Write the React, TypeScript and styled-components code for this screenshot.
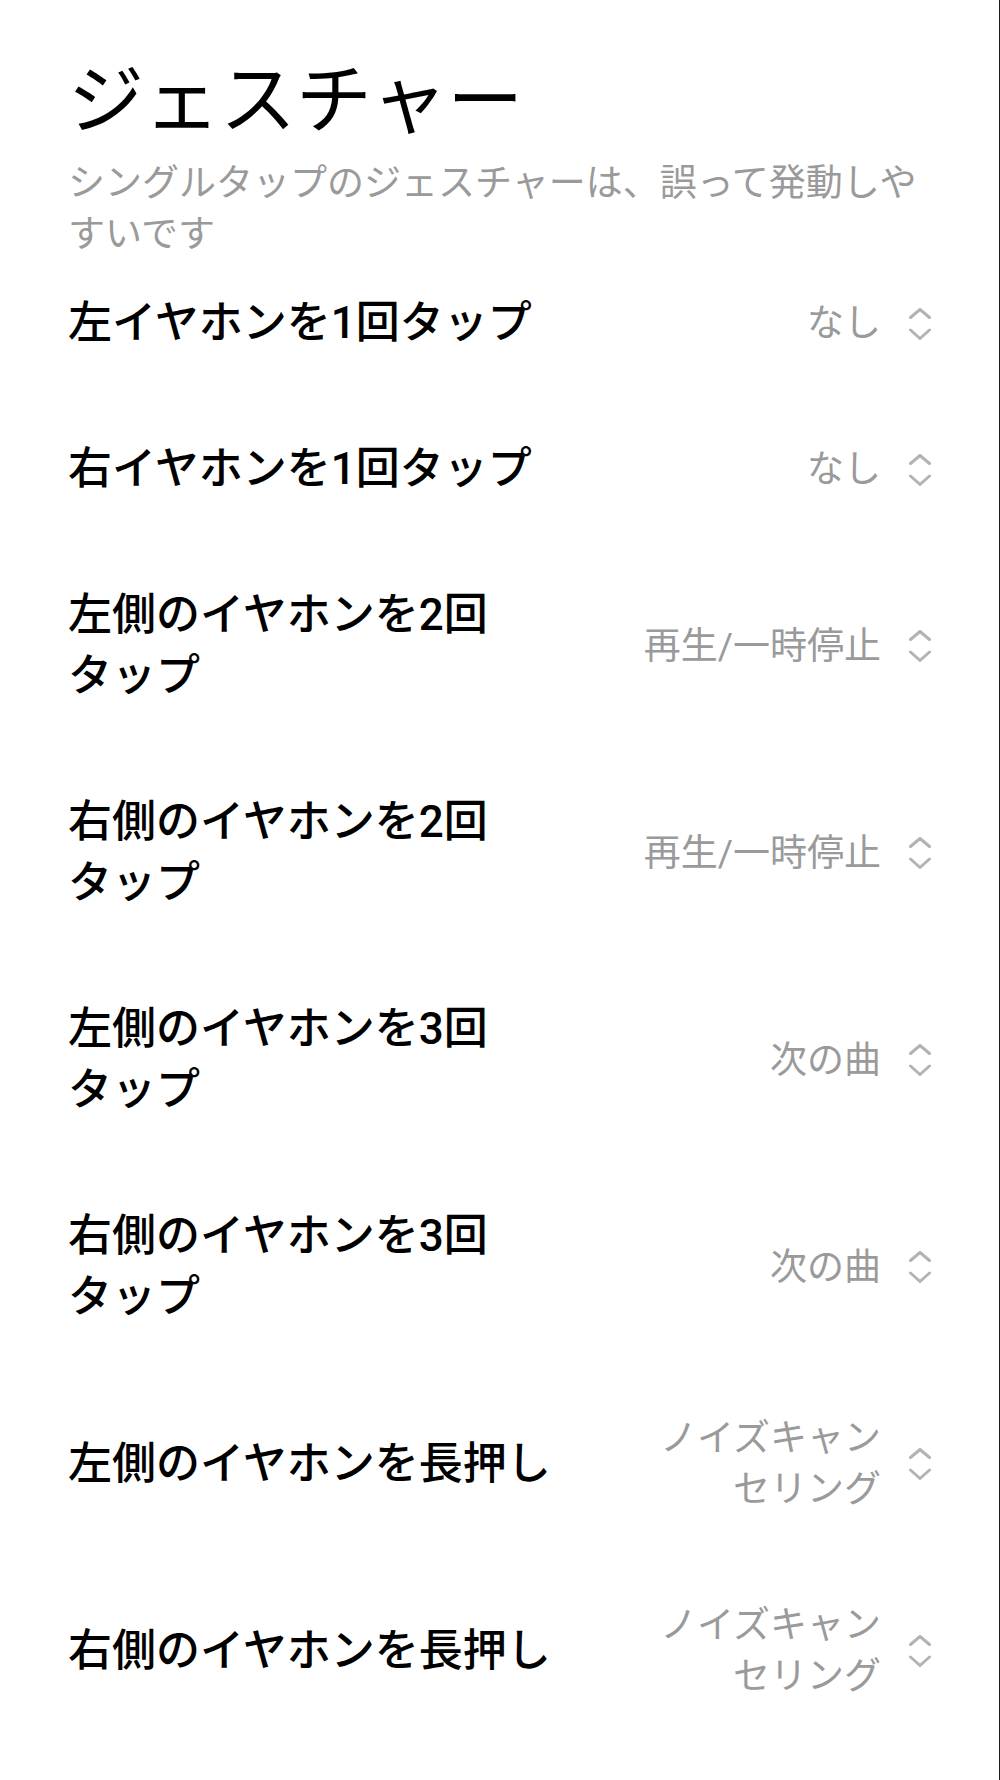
import React from "react";
import styled, { createGlobalStyle } from "styled-components";

const GlobalStyle = createGlobalStyle`
  html, body {
    margin: 0;
    padding: 0;
    background: #ffffff;
  }
  body {
    font-family: Roboto, "Noto Sans CJK JP", "Noto Sans", sans-serif;
    -webkit-font-smoothing: antialiased;
  }
`;

const Page = styled.div`
  box-sizing: border-box;
  width: 1000px;
  min-height: 1780px;
  padding: 51px 68px 0 68px;
  border-right: 1px solid #1a1a1a;
  background: #ffffff;
`;

const Header = styled.header`
  display: flex;
  flex-direction: column;
`;

const Title = styled.h1`
  margin: 0 0 7px 0;
  font-size: 76px;
  line-height: 100px;
  font-weight: 400;
  color: #000000;
  letter-spacing: 0;
`;

const Subtitle = styled.p`
  margin: 0;
  font-size: 37px;
  line-height: 51px;
  font-weight: 400;
  color: #9a9a9a;
`;

const List = styled.div`
  display: flex;
  flex-direction: column;
`;

const Row = styled.div`
  display: flex;
  align-items: center;
  justify-content: space-between;
  padding: 33px 0 52px 0;
`;

const Label = styled.div`
  flex: 1 1 auto;
  max-width: 500px;
  font-size: 44px;
  line-height: 61px;
  font-weight: 500;
  color: #000000;
  word-break: keep-all;
`;

const Control = styled.div`
  display: flex;
  align-items: center;
  gap: 28px;
  flex: 0 0 auto;
`;

const Value = styled.div`
  max-width: 260px;
  font-size: 37px;
  line-height: 51px;
  font-weight: 400;
  color: #9a9a9a;
  text-align: right;
  word-break: keep-all;
`;

const ChevronIcon = styled.svg`
  display: block;
  width: 22px;
  height: 32px;
  flex: 0 0 auto;
`;

const UpDown = () => (
  <ChevronIcon viewBox="0 0 22 32" fill="none" stroke="#b3b3b3" strokeWidth={3} strokeLinecap="round" strokeLinejoin="round">
    <path d="M1.5 9.5 L11 1.5 L20.5 9.5" />
    <path d="M1.5 22 L11 30.5 L20.5 22" />
  </ChevronIcon>
);

type Item = { label: string[]; value: string[] };

const items: Item[] = [
  { label: ["左イヤホンを1回タップ"], value: ["なし"] },
  { label: ["右イヤホンを1回タップ"], value: ["なし"] },
  { label: ["左側のイヤホンを2回", "タップ"], value: ["再生/一時停止"] },
  { label: ["右側のイヤホンを2回", "タップ"], value: ["再生/一時停止"] },
  { label: ["左側のイヤホンを3回", "タップ"], value: ["次の曲"] },
  { label: ["右側のイヤホンを3回", "タップ"], value: ["次の曲"] },
  { label: ["左側のイヤホンを長押し"], value: ["ノイズキャン", "セリング"] },
  { label: ["右側のイヤホンを長押し"], value: ["ノイズキャン", "セリング"] },
];

const Phrases = ({ parts }: { parts: string[] }) => (
  <>
    {parts.map((p, i) => (
      <React.Fragment key={i}>
        {i > 0 && <wbr />}
        {p}
      </React.Fragment>
    ))}
  </>
);

export default function App() {
  return (
    <>
      <GlobalStyle />
      <Page>
        <Header>
          <Title>ジェスチャー</Title>
          <Subtitle>シングルタップのジェスチャーは、誤って発動しやすいです</Subtitle>
        </Header>
        <List>
          {items.map((it, i) => (
            <Row key={i}>
              <Label>
                <Phrases parts={it.label} />
              </Label>
              <Control>
                <Value>
                  <Phrases parts={it.value} />
                </Value>
                <UpDown />
              </Control>
            </Row>
          ))}
        </List>
      </Page>
    </>
  );
}
